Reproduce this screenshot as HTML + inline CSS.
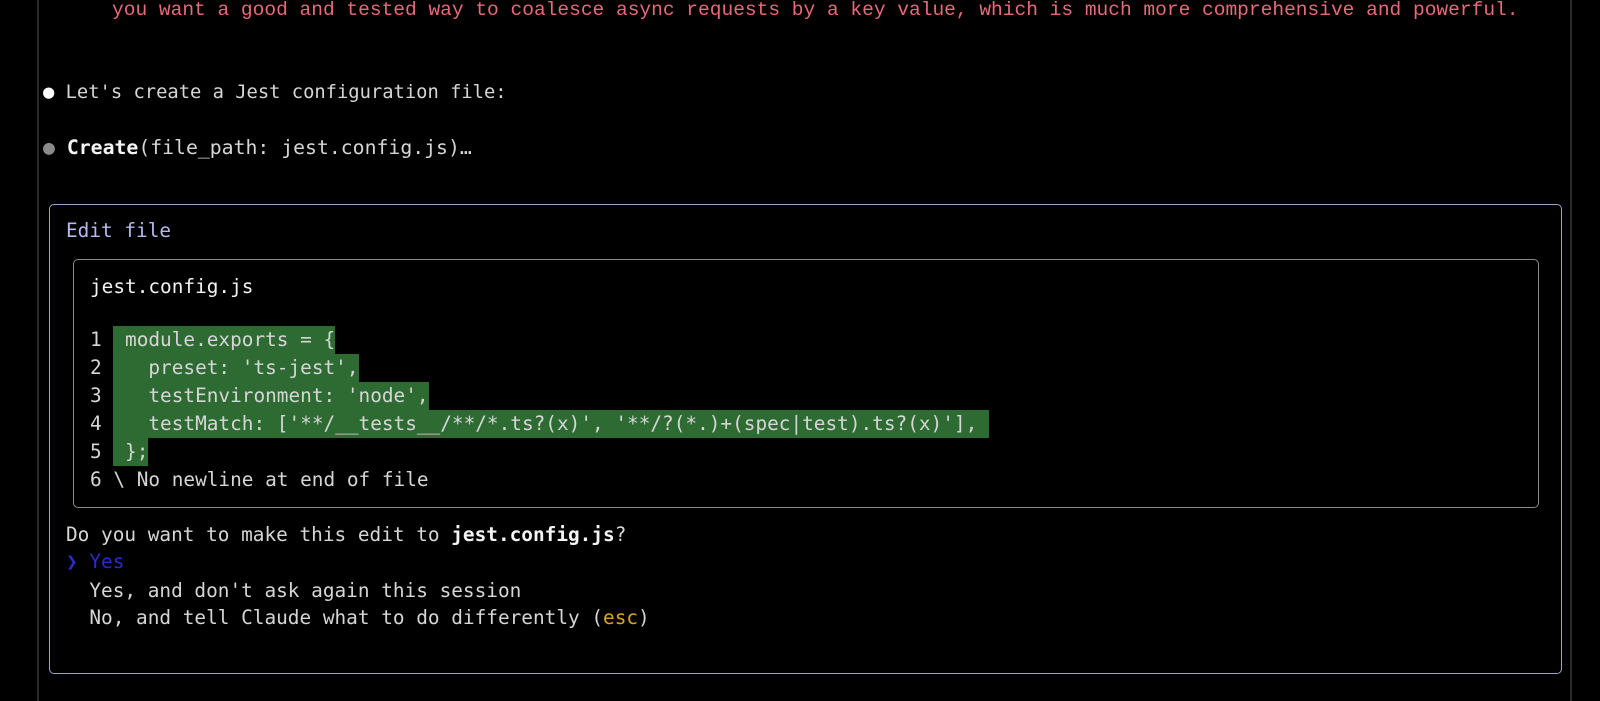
<!DOCTYPE html>
<html><head><meta charset="utf-8"><style>
html,body{margin:0;padding:0;background:#000;width:1600px;height:701px;overflow:hidden}
body{position:relative;font-family:"DejaVu Sans Mono","Liberation Mono",monospace;font-size:19.4px;color:#d6d6d6}
.l{position:absolute;white-space:pre;line-height:28px;height:28px}
.vl{position:absolute;top:0;width:2px;height:701px;background:#2a2a2a}
.box{position:absolute;box-sizing:border-box;border-radius:5px}
.g{background:#2e6b33;display:inline-block;height:28px}
b{font-weight:bold;color:#f4f4f4}
</style></head><body>
<div class="vl" style="left:37px"></div>
<div class="vl" style="left:1570px"></div>
<div class="l" style="left:112px;top:-4px;color:#e8697a;font-family:'Liberation Mono',monospace;font-size:19.55px">you want a good and tested way to coalesce async requests by a key value, which is much more comprehensive and powerful.</div>
<div class="l" style="left:43px;top:79px;font-size:18.8px"><span style="color:#fff">●</span> Let's create a Jest configuration file:</div>
<div class="l" style="left:43px;top:134px;font-size:19.8px"><span style="color:#8a8a8a">●</span> <b>Create</b>(file_path: jest.config.js)…</div>
<div class="box" style="left:49px;top:204px;width:1513px;height:470px;border:1.5px solid #9ea2c4"></div>
<div class="l" style="left:66px;top:217px;color:#b7b9ee">Edit file</div>
<div class="box" style="left:73px;top:259px;width:1466px;height:249px;border:1.5px solid #8a8a8a"></div>
<div class="l" style="left:90px;top:273px;color:#f2f2f2">jest.config.js</div>
<div class="l" style="left:90px;top:326px">1 <span class="g"> module.exports = {</span></div>
<div class="l" style="left:90px;top:354px">2 <span class="g">   preset: 'ts-jest',</span></div>
<div class="l" style="left:90px;top:382px">3 <span class="g">   testEnvironment: 'node',</span></div>
<div class="l" style="left:90px;top:410px">4 <span class="g">   testMatch: ['**/__tests__/**/*.ts?(x)', '**/?(*.)+(spec|test).ts?(x)'], </span></div>
<div class="l" style="left:90px;top:438px">5 <span class="g"> };</span></div>
<div class="l" style="left:90px;top:466px">6 \ No newline at end of file</div>
<div class="l" style="left:66px;top:521px">Do you want to make this edit to <b>jest.config.js</b>?</div>
<div class="l" style="left:66px;top:548px;color:#2b2bc8">❯ Yes</div>
<div class="l" style="left:66px;top:577px">  Yes, and don't ask again this session</div>
<div class="l" style="left:66px;top:604px">  No, and tell Claude what to do differently (<span style="color:#d8a822">esc</span>)</div>
</body></html>
